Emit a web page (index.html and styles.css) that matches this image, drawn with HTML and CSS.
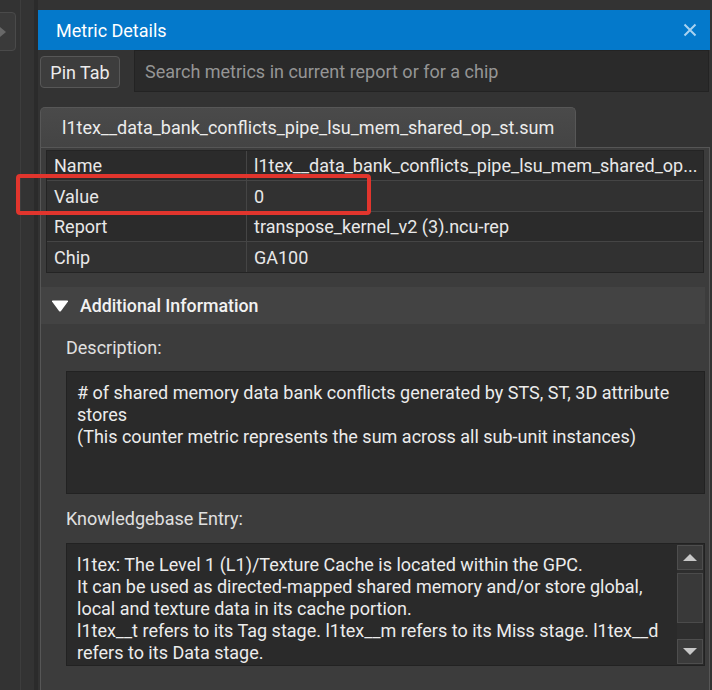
FILE: index.html
```html
<!DOCTYPE html>
<html>
<head>
<meta charset="utf-8">
<link rel="stylesheet" href="styles.css">
</head>
<body>
<div class="app">
  <div class="sidebar">
    <div class="side-col">
      <div class="side-btn"><span class="side-arrow"></span></div>
    </div>
    <div class="side-gap"></div>
    <div class="side-sep"></div>
  </div>
  <div class="panel">
    <div class="titlebar">
      <span class="title">Metric Details</span>
      <svg class="close" width="14" height="14" viewBox="0 0 14 14"><path d="M1.5 1.5 L12.5 12.5 M12.5 1.5 L1.5 12.5" stroke="#a9d2f0" stroke-width="2" fill="none"/></svg>
    </div>
    <div class="toolbar">
      <button class="pin">Pin Tab</button>
      <div class="search">Search metrics in current report or for a chip</div>
    </div>
    <div class="tabbar">
      <div class="tab">l1tex__data_bank_conflicts_pipe_lsu_mem_shared_op_st.sum</div>
    </div>
    <div class="pane">
      <div class="table">
        <div class="row odd"><div class="key">Name</div><div class="val">l1tex__data_bank_conflicts_pipe_lsu_mem_shared_op...</div></div>
        <div class="row even"><div class="key">Value</div><div class="val">0</div></div>
        <div class="row odd"><div class="key">Report</div><div class="val">transpose_kernel_v2 (3).ncu-rep</div></div>
        <div class="row even"><div class="key">Chip</div><div class="val">GA100</div></div>
      </div>
      <div class="section-head">
        <svg class="caret" width="18" height="12" viewBox="0 0 18 12"><path d="M1 1.5 Q0.5 0.5 2 0.5 L16 0.5 Q17.5 0.5 17 1.5 L10 11 Q9 12 8 11 Z" fill="#ffffff"/></svg>
        <span>Additional Information</span>
      </div>
      <div class="section-body">
        <div class="label">Description:</div>
        <div class="textbox desc"># of shared memory data bank conflicts generated by STS, ST, 3D attribute stores<br>(This counter metric represents the sum across all sub-unit instances)</div>
        <div class="label kb-label">Knowledgebase Entry:</div>
        <div class="textbox kb">
          <div class="kb-text">l1tex: The Level 1 (L1)/Texture Cache is located within the GPC.<br>It can be used as directed-mapped shared memory and/or store global, local and texture data in its cache portion.<br>l1tex__t refers to its Tag stage. l1tex__m refers to its Miss stage. l1tex__d refers to its Data stage.</div>
          <div class="scrollbar">
            <div class="sb-btn"><span class="tri-up"></span></div>
            <div class="sb-track">
              <div class="sb-thumb"></div>
            </div>
            <div class="sb-btn"><span class="tri-down"></span></div>
          </div>
        </div>
      </div>
    </div>
  </div>
</div>
<div class="highlight"></div>
</body>
</html>
```
FILE: styles.css
```css
html, body {
  margin: 0;
  padding: 0;
  width: 712px;
  height: 690px;
  overflow: hidden;
  background: #333333;
  font-family: Roboto, "Liberation Sans", sans-serif;
  color: #e6e6e6;
}
.app {
  display: flex;
  height: 690px;
}
.sidebar {
  display: flex;
  width: 38px;
  flex-shrink: 0;
}
.side-col {
  width: 20px;
  border-right: 1px solid #3d3d3d;
  overflow: hidden;
}
.side-btn {
  margin-top: 12px;
  margin-left: -20px;
  width: 36px;
  height: 39px;
  border: 1px solid #4a4a4a;
  border-radius: 4px;
  background: #3a3a3a;
  display: flex;
  align-items: center;
  justify-content: flex-start;
  padding-left: 19px;
  box-sizing: border-box;
}
.side-arrow {
  width: 0;
  height: 0;
  border-top: 5px solid transparent;
  border-bottom: 5px solid transparent;
  border-left: 6px solid #686868;
}
.side-gap {
  width: 13px;
}
.side-sep {
  width: 4px;
  background: #2b2b2b;
}
.panel {
  flex: 1;
  display: flex;
  flex-direction: column;
  padding-top: 10px;
  min-width: 0;
}
.titlebar {
  height: 40px;
  background: #0479cb;
  display: flex;
  align-items: center;
  justify-content: space-between;
  padding: 0 13px 0 18px;
  margin-right: 2px;
}
.title {
  color: #ffffff;
  font-size: 18px;
}
.close {
  display: block;
}
.toolbar {
  height: 42px;
  display: flex;
  align-items: flex-start;
}
.pin {
  margin: 6px 0 0 2px;
  width: 80px;
  height: 32px;
  background: #3d3d3d;
  border: 1px solid #575757;
  border-radius: 4px;
  color: #ececec;
  font-family: Roboto, "Liberation Sans", sans-serif;
  font-size: 18px;
  padding: 0;
}
.search {
  margin-left: 14px;
  flex: 1;
  height: 42px;
  box-sizing: border-box;
  background: #2a2a2a;
  border: 1px solid #232323;
  margin-right: 3px;
  color: #959595;
  font-size: 18px;
  padding-left: 10px;
  display: flex;
  align-items: center;
}
.tabbar {
  padding-top: 15px;
  padding-left: 2px;
  display: flex;
}
.tab {
  height: 40px;
  box-sizing: border-box;
  padding: 0 22px 0 21px;
  width: 536px;
  background: linear-gradient(#4a4a4a, #444444);
  border: 1px solid #575757;
  border-bottom: none;
  border-radius: 5px 5px 0 0;
  display: flex;
  align-items: center;
  font-size: 18px;
  color: #ececec;
  white-space: nowrap;
}
.pane {
  flex: 1;
  margin-left: 2px;
  margin-right: 2px;
  border: 1px solid #565656;
  border-bottom: none;
  background: #3c3c3c;
  padding-top: 2px;
}
.table {
  margin: 0 5px 0 5px;
  border: 1px solid #242424;
}
.row {
  display: flex;
  height: 30px;
  font-size: 18px;
  color: #e8e8e8;
}
.row + .row {
  border-top: 1px solid #454545;
}
.row.odd {
  background: #2b2b2b;
  height: 29px;
}
.row.even {
  background: #313131;
}
.key {
  width: 200px;
  border-right: 1px solid #454545;
  padding-left: 7px;
  display: flex;
  align-items: center;
  box-sizing: border-box;
}
.val {
  flex: 1;
  padding-left: 7px;
  display: flex;
  align-items: center;
  white-space: nowrap;
  overflow: hidden;
}
.section-head {
  margin-top: 14px;
  height: 37px;
  background: #434343;
  display: flex;
  align-items: center;
  padding-left: 10px;
  margin-right: 4px;
  font-size: 17.8px;
  font-weight: 500;
  color: #f2f2f2;
}
.caret {
  margin-right: 11px;
}
.section-body {
  padding: 0 4px 0 25px;
}
.label {
  font-size: 18px;
  color: #e0e0e0;
  height: 47px;
  display: flex;
  align-items: center;
}
.kb-label {
  height: 49px;
}
.textbox {
  background: #2a2a2a;
  border: 1px solid #222222;
  box-sizing: border-box;
  height: 123px;
  font-size: 18px;
  line-height: 22px;
  color: #ececec;
}
.desc {
  padding: 10px 10px 0 10px;
}
.kb {
  display: flex;
}
.kb-text {
  flex: 1;
  padding: 10px 8px 0 10px;
}
.scrollbar {
  width: 26px;
  margin: 1px 1px 1px 0;
  display: flex;
  flex-direction: column;
  background: #2e2e2e;
}
.sb-btn {
  height: 25px;
  background: #3b3b3b;
  border: 1px solid #4e4e4e;
  box-sizing: border-box;
  display: flex;
  align-items: center;
  justify-content: center;
}
.sb-track {
  flex: 1;
  padding-top: 3px;
}
.sb-thumb {
  height: 50px;
  background: #393939;
  border: 1px solid #4b4b4b;
  box-sizing: border-box;
}
.tri-up {
  width: 0;
  height: 0;
  border-left: 7px solid transparent;
  border-right: 7px solid transparent;
  border-bottom: 7px solid #c8c8c8;
}
.tri-down {
  width: 0;
  height: 0;
  border-left: 7px solid transparent;
  border-right: 7px solid transparent;
  border-top: 7px solid #c8c8c8;
}
.highlight {
  position: absolute;
  left: 16px;
  top: 174px;
  width: 355px;
  height: 41px;
  box-sizing: border-box;
  border: 4px solid #e1352d;
  border-radius: 4px;
}
```
